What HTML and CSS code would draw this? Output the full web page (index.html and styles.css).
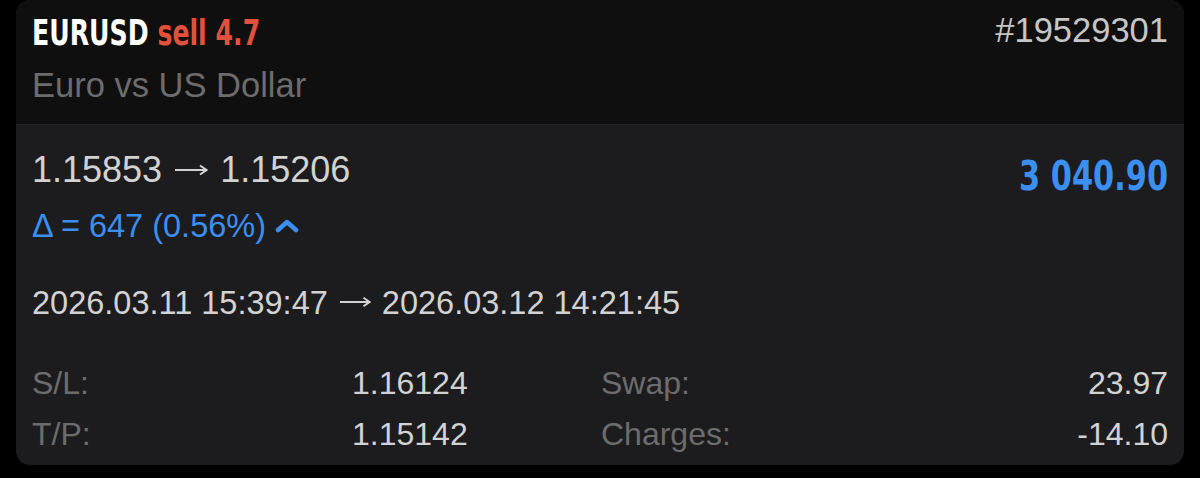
FILE: index.html
```html
<!DOCTYPE html>
<html lang="en">
<head>
    <meta charset="UTF-8">
    <meta name="viewport" content="width=device-width, initial-scale=1.0">
    <title>EURUSD sell 4.7</title>
    <link rel="stylesheet" href="styles.css">
</head>
<body>
    <div class="deal">
        <!-- Header -->
        <div class="deal-head">
            <div class="deal-title">
                <div class="symbol">EURUSD <span class="side">sell 4.7</span></div>
                <div class="desc">Euro vs US Dollar</div>
            </div>
            <div class="ticket">#19529301</div>
        </div>

        <!-- Body -->
        <div class="deal-body">
            <div class="price-row">
                <div>
                    <div class="prices">1.15853 <svg class="arrow" viewBox="0 0 34 12" width="34" height="12"><path d="M1 6 H32 M26 1.5 L32.5 6 L26 10.5" fill="none" stroke="currentColor" stroke-width="2"/></svg> 1.15206</div>
                    <div class="delta">&Delta; = 647 (0.56%)
                        <svg class="chevron" viewBox="0 0 24 14" width="24" height="14">
                            <path d="M3 11 L12 3 L21 11" fill="none" stroke="currentColor" stroke-width="4.5" stroke-linecap="round" stroke-linejoin="round"/>
                        </svg>
                    </div>
                </div>
                <div class="profit"><span>3 040.90</span></div>
            </div>

            <div class="times">2026.03.11 15:39:47 <svg class="arrow" viewBox="0 0 34 12" width="32" height="12"><path d="M1 6 H32 M26 1.5 L32.5 6 L26 10.5" fill="none" stroke="currentColor" stroke-width="2"/></svg> 2026.03.12 14:21:45</div>

            <div class="details">
                <div class="label">S/L:</div>
                <div class="value">1.16124</div>
                <div class="label right">Swap:</div>
                <div class="value">23.97</div>
                <div class="label">T/P:</div>
                <div class="value">1.15142</div>
                <div class="label right">Charges:</div>
                <div class="value">-14.10</div>
            </div>
        </div>
    </div>
</body>
</html>
```

FILE: styles.css
```css
/* General Styles */
body {
    margin: 0;
    padding: 0;
    background: #000;
    font-family: 'Liberation Sans', Arial, sans-serif;
    color: #d2d2d2;
}

.deal {
    margin: 0 16px;
    height: 465px;
    border-radius: 14px;
    overflow: hidden;
    background: #1c1c1e;
    display: flex;
    flex-direction: column;
}

.deal-head {
    height: 125px;
    flex-shrink: 0;
    box-sizing: border-box;
    background: #0f0f0f;
    border-bottom: 1px solid #232325;
    padding: 12px 16px 0 16px;
    display: flex;
    justify-content: space-between;
    align-items: flex-start;
}

/* condensed bold headline */
.symbol {
    font-family: 'DejaVu Sans', sans-serif;
    font-weight: bold;
    font-size: 36px;
    line-height: 42px;
    color: #fff;
    white-space: nowrap;
    transform: scaleX(0.7);
    transform-origin: left center;
}

.side {
    color: #e2513c;
}

.desc {
    margin-top: 11px;
    font-size: 34.5px;
    line-height: 40px;
    color: #6c6c6c;
}

.ticket {
    font-size: 34.5px;
    line-height: 36px;
    color: #c6c6c6;
}

.deal-body {
    flex: 1;
    padding: 25px 16px 0 16px;
}

.price-row {
    display: flex;
    justify-content: space-between;
    align-items: flex-start;
}

.prices {
    font-size: 36px;
    line-height: 40px;
    color: #d2d2d2;
    white-space: nowrap;
}

.arrow {
    vertical-align: 6px;
    margin: 0 2px;
}

.delta {
    margin-top: 16px;
    font-size: 32.5px;
    line-height: 40px;
    color: #3b8ff0;
    display: flex;
    align-items: center;
    gap: 9px;
}

.profit {
    font-family: 'DejaVu Sans', sans-serif;
    font-weight: bold;
    font-size: 40px;
    line-height: 48px;
    margin-top: 2px;
    color: #3b8ff0;
    white-space: nowrap;
}

.profit span {
    display: inline-block;
    transform: scaleX(0.76);
    transform-origin: right center;
}

.times {
    margin-top: 37px;
    font-size: 32.5px;
    line-height: 40px;
    color: #d2d2d2;
    white-space: nowrap;
}

.details {
    margin-top: 40px;
    display: grid;
    grid-template-columns: 320px 115px 1fr auto;
    row-gap: 11px;
    font-size: 32px;
    line-height: 40px;
}

.label {
    color: #6c6c6c;
}

.label.right {
    padding-left: 134px;
}

.value {
    text-align: right;
    color: #d2d2d2;
    white-space: nowrap;
}
```
